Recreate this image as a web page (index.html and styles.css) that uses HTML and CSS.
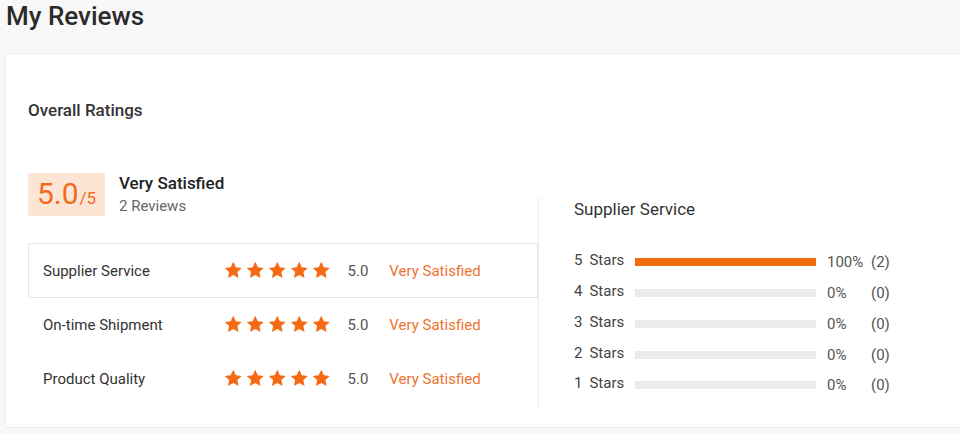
FILE: index.html
```html
<!DOCTYPE html>
<html lang="en">
<head>
<meta charset="utf-8">
<title>My Reviews</title>
<link rel="stylesheet" href="styles.css">
</head>
<body>
<svg class="defs" width="0" height="0" aria-hidden="true">
  <defs>
    <symbol id="star" viewBox="0 0 24 24">
      <path d="M12 1l3.35 6.95 7.65 1.05-5.6 5.3 1.45 7.6L12 18.3l-6.85 3.6 1.45-7.6L1 9l7.65-1.05z"/>
    </symbol>
  </defs>
</svg>

<h1 class="page-title">My Reviews</h1>

<section class="card">
  <h2 class="section-title">Overall Ratings</h2>
  <div class="summary">
    <div class="summary-left">
      <div class="overall">
        <div class="score-badge"><span class="score">5.0</span><span class="score-max">/5</span></div>
        <div class="overall-text">
          <div class="overall-label">Very Satisfied</div>
          <div class="overall-count">2 Reviews</div>
        </div>
      </div>
      <ul class="criteria">
        <li class="criterion is-active">
          <span class="criterion-name">Supplier Service</span>
          <span class="stars">
            <svg class="star"><use href="#star"/></svg><svg class="star"><use href="#star"/></svg><svg class="star"><use href="#star"/></svg><svg class="star"><use href="#star"/></svg><svg class="star"><use href="#star"/></svg>
          </span>
          <span class="criterion-score">5.0</span>
          <span class="criterion-level">Very Satisfied</span>
        </li>
        <li class="criterion">
          <span class="criterion-name">On-time Shipment</span>
          <span class="stars">
            <svg class="star"><use href="#star"/></svg><svg class="star"><use href="#star"/></svg><svg class="star"><use href="#star"/></svg><svg class="star"><use href="#star"/></svg><svg class="star"><use href="#star"/></svg>
          </span>
          <span class="criterion-score">5.0</span>
          <span class="criterion-level">Very Satisfied</span>
        </li>
        <li class="criterion">
          <span class="criterion-name">Product Quality</span>
          <span class="stars">
            <svg class="star"><use href="#star"/></svg><svg class="star"><use href="#star"/></svg><svg class="star"><use href="#star"/></svg><svg class="star"><use href="#star"/></svg><svg class="star"><use href="#star"/></svg>
          </span>
          <span class="criterion-score">5.0</span>
          <span class="criterion-level">Very Satisfied</span>
        </li>
      </ul>
    </div>

    <div class="summary-right">
      <h3 class="breakdown-title">Supplier Service</h3>
      <ul class="breakdown">
        <li class="breakdown-row">
          <span class="breakdown-label"><span class="breakdown-num">5</span>Stars</span>
          <span class="bar"><span class="bar-fill" style="width:100%"></span></span>
          <span class="breakdown-pct">100%</span>
          <span class="breakdown-count">(2)</span>
        </li>
        <li class="breakdown-row">
          <span class="breakdown-label"><span class="breakdown-num">4</span>Stars</span>
          <span class="bar"><span class="bar-fill" style="width:0%"></span></span>
          <span class="breakdown-pct">0%</span>
          <span class="breakdown-count">(0)</span>
        </li>
        <li class="breakdown-row">
          <span class="breakdown-label"><span class="breakdown-num">3</span>Stars</span>
          <span class="bar"><span class="bar-fill" style="width:0%"></span></span>
          <span class="breakdown-pct">0%</span>
          <span class="breakdown-count">(0)</span>
        </li>
        <li class="breakdown-row">
          <span class="breakdown-label"><span class="breakdown-num">2</span>Stars</span>
          <span class="bar"><span class="bar-fill" style="width:0%"></span></span>
          <span class="breakdown-pct">0%</span>
          <span class="breakdown-count">(0)</span>
        </li>
        <li class="breakdown-row">
          <span class="breakdown-label"><span class="breakdown-num">1</span>Stars</span>
          <span class="bar"><span class="bar-fill" style="width:0%"></span></span>
          <span class="breakdown-pct">0%</span>
          <span class="breakdown-count">(0)</span>
        </li>
      </ul>
    </div>
  </div>
</section>
</body>
</html>
```

FILE: styles.css
```css
* { box-sizing: border-box; }

html, body {
  margin: 0;
  padding: 0;
  background: #f8f8f8;
  font-family: Roboto, "Liberation Sans", Arial, sans-serif;
  color: #333;
  overflow: hidden;
}

.defs { position: absolute; width: 0; height: 0; }

.page-title {
  margin: 0;
  height: 53px;
  padding: 1px 0 0 6px;
  font-size: 26px;
  line-height: 30px;
  font-weight: 500;
  color: #2b2b2b;
}

.card {
  margin-left: 5px;
  background: #fff;
  border-top: 1px solid #ebebeb;
  border-left: 1px solid #ebebeb;
  border-bottom: 1px solid #ebebeb;
  padding: 45px 0 21px 22px;
}

.section-title {
  margin: 0;
  font-size: 17px;
  line-height: 22px;
  font-weight: 500;
  color: #333;
}

.summary {
  margin-top: 52px;
  display: flex;
  align-items: flex-end;
}

.summary-left {
  width: 510px;
}

.overall {
  display: flex;
  align-items: flex-start;
}

.score-badge {
  width: 77px;
  height: 43px;
  background: #fde5d6;
  border-radius: 2px;
  display: flex;
  align-items: baseline;
  justify-content: center;
  padding-top: 3px;
  color: #f06b1c;
}

.score {
  font-size: 30px;
  line-height: 36px;
}

.score-max {
  font-size: 17px;
  margin-left: 1px;
}

.overall-text {
  margin-left: 14px;
  display: flex;
  flex-direction: column;
  gap: 3px;
}

.overall-label {
  font-size: 17px;
  line-height: 20px;
  font-weight: 500;
  color: #222;
}

.overall-count {
  font-size: 15px;
  line-height: 20px;
  color: #666;
}

.criteria {
  list-style: none;
  margin: 27px 0 0;
  padding: 0;
}

.criterion {
  height: 55px;
  display: flex;
  align-items: center;
  padding-left: 14px;
  border: 1px solid transparent;
  font-size: 15px;
}

.criterion.is-active {
  border-color: #e6e6e6;
}

.criterion + .criterion { margin-top: -1px; }

.criterion-name {
  width: 181px;
  color: #333;
}

.stars {
  display: flex;
  gap: 3.5px;
}

.star {
  width: 18.5px;
  height: 18.5px;
  fill: #f56a14;
}

.criterion-score {
  margin-left: 17px;
  color: #555;
}

.criterion-level {
  margin-left: 21px;
  color: #ed7231;
}

.summary-right {
  height: 210px;
  border-left: 1px solid #ececec;
  padding: 1px 0 0 35px;
  margin-bottom: -1px;
}

.breakdown-title {
  margin: 0;
  font-size: 17px;
  line-height: 22px;
  font-weight: 400;
  color: #333;
}

.breakdown {
  list-style: none;
  margin: 27px 0 0;
  padding: 0;
}

.breakdown-row {
  height: 30.75px;
  display: flex;
  align-items: center;
  font-size: 15px;
}

.breakdown-label {
  width: 61px;
  color: #444;
  margin-bottom: 4px;
}

.breakdown-num {
  margin-right: 7px;
}

.bar {
  width: 181px;
  height: 8px;
  background: #ebebeb;
  display: block;
}

.bar-fill {
  display: block;
  height: 100%;
  background: #f26b0f;
}

.breakdown-pct {
  margin-left: 11px;
  width: 44px;
  color: #555;
}

.breakdown-count {
  color: #555;
}
```
